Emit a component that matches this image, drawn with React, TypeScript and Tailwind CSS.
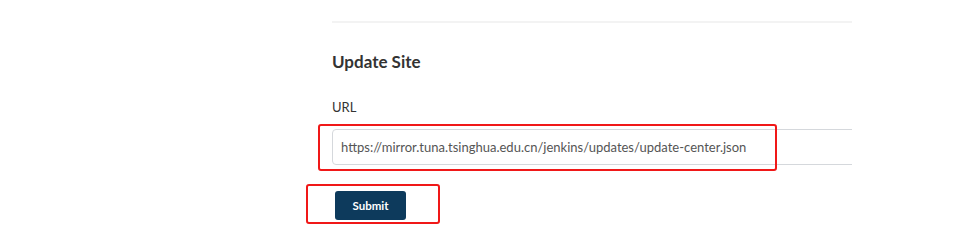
export default function App() {
  return (
    <main
      className="h-[241px] w-[976px] overflow-hidden bg-white"
      style={{ fontFamily: "Lato, 'Open Sans', sans-serif" }}
    >
      <div className="ml-[332px] w-[520px] pt-[21px]">
        <div className="h-[2px] bg-[#f3f3f3]" />
        <h2 className="mt-[29px] text-[17px] font-bold leading-[20px] text-[#333]">
          Update Site
        </h2>
        <label className="mt-[27px] block text-[13px] leading-[16px] text-[#333]">
          URL
        </label>
        <div className="relative mt-[14px]">
          <div className="overflow-hidden">
            <input
              readOnly
              value="https://mirror.tuna.tsinghua.edu.cn/jenkins/updates/update-center.json"
              className="h-[36px] w-[540px] rounded-[4px] border border-[#d5d8dc] pl-[8px] text-[13px] text-[#555] outline-none"
            />
          </div>
          <span className="pointer-events-none absolute -left-[14px] -top-[5px] h-[47px] w-[459px] rounded-[3px] border-2 border-[#f01818]" />
        </div>
        <div className="relative mt-[26px] w-fit pl-[3px]">
          <button className="h-[29px] w-[71px] rounded-[3px] bg-[#0d3a5c] text-[11.5px] font-bold text-white">
            Submit
          </button>
          <span className="pointer-events-none absolute -left-[26px] -top-[7px] h-[40px] w-[134px] rounded-[3px] border-2 border-[#f01818]" />
        </div>
      </div>
    </main>
  );
}
